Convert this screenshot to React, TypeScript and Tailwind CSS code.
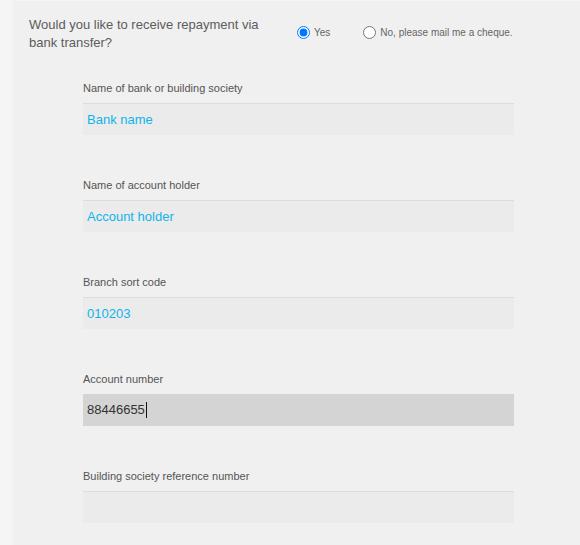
import React from 'react';

const fields = [
  { label: 'Name of bank or building society', placeholder: 'Bank name', value: '' },
  { label: 'Name of account holder', placeholder: 'Account holder', value: '' },
  { label: 'Branch sort code', placeholder: '010203', value: '' },
  { label: 'Account number', placeholder: '', value: '88446655', focused: true },
  { label: 'Building society reference number', placeholder: '', value: '' },
];

export default function App() {
  return (
    <div className="min-h-[545px] bg-[#f5f5f5] pt-px pl-[13px] font-['Liberation_Sans',Arial,sans-serif]">
      <div className="min-h-[544px] bg-[#f0f0f0] pl-[16px] pt-[15px]">
        {/* Repayment question */}
        <div className="flex items-start">
          <p className="w-[255px] text-[13px] leading-[18px] text-[#5c5c5c]">
            Would you like to receive repayment via bank transfer?
          </p>
          <div className="ml-[13px] flex items-center pt-[10px] text-[10px] leading-[13px] text-[#666]">
            <label className="flex items-center">
              <input type="radio" name="repay" defaultChecked className="m-0 h-[13px] w-[13px]" />
              <span className="ml-[4px]">Yes</span>
            </label>
            <label className="ml-[33px] flex items-center">
              <input type="radio" name="repay" className="m-0 h-[13px] w-[13px]" />
              <span className="ml-[4px]">No, please mail me a cheque.</span>
            </label>
          </div>
        </div>

        {/* Bank details */}
        <div className="mt-[30px] ml-[54px] flex w-[431px] flex-col gap-[44px]">
          {fields.map((f) => (
            <div key={f.label} className="flex flex-col">
              <label className="text-[11px] leading-[13px] text-[#555]">{f.label}</label>
              {f.focused ? (
                <div className="mt-[8px] flex h-[32px] items-center bg-[#d4d4d4] pl-[4px] text-[13px] text-[#333]">
                  {f.value}
                  <span className="ml-px h-[16px] w-px bg-[#111]" />
                </div>
              ) : (
                <input
                  type="text"
                  placeholder={f.placeholder}
                  className="mt-[8px] h-[32px] border-t border-[#dcdcdc] bg-[#ebebeb] pl-[4px] text-[13px] text-[#333] outline-none placeholder:text-[#0db4ea]"
                />
              )}
            </div>
          ))}
        </div>
      </div>
    </div>
  );
}
